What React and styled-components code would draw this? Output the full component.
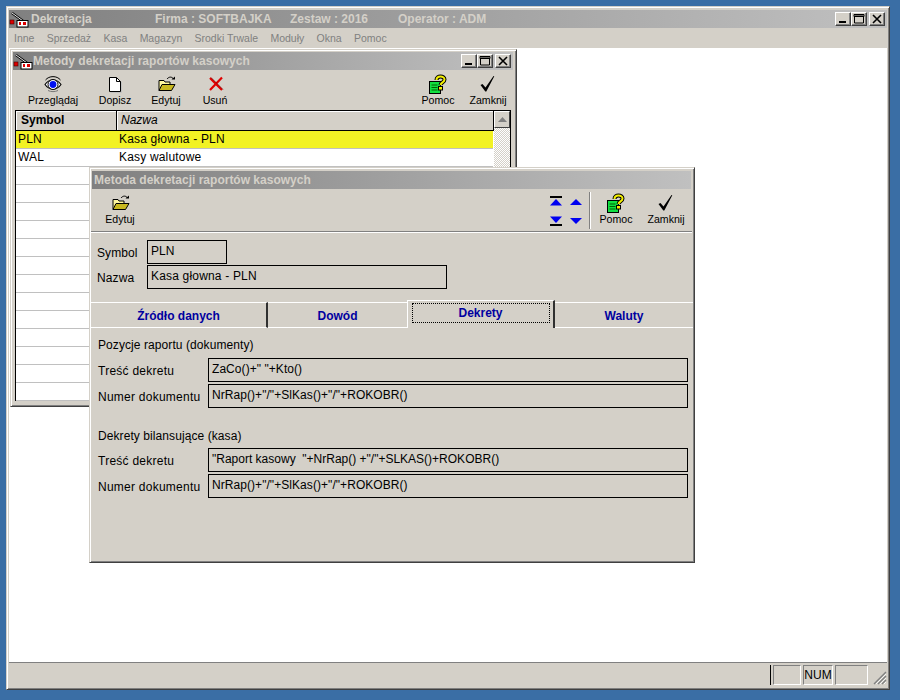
import React from "react";
import styled, { createGlobalStyle } from "styled-components";

const Global = createGlobalStyle`
  html, body { margin: 0; padding: 0; height: 700px; overflow: hidden; background: #3a6ea5; }
  body { font-family: "Liberation Sans", Arial, sans-serif; font-size: 12px; color: #000; }
  * { box-sizing: border-box; }
`;

const grey = "#d4d0c8";

const MainWindow = styled.div`
  margin: 6px 0 0 6px;
  width: 884px;
  height: 684px;
  background: ${grey};
  border: 1px solid;
  border-color: ${grey} #404040 #404040 ${grey};
  box-shadow: inset 1px 1px 0 #fff, inset -1px -1px 0 #808080;
  padding: 3px 2px 3px 2px;
  display: flex;
  flex-direction: column;
`;

const TitleBar = styled.div`
  height: 18px;
  flex: none;
  display: flex;
  align-items: center;
  background: linear-gradient(to right, #808080, #c0c0c0);
  color: ${grey};
  font-weight: bold;
  font-size: 12px;
  white-space: nowrap;
  padding-left: ${(p) => p.$pad || 0}px;
`;

const TitleIcon = styled.svg`
  width: 20px;
  height: 17px;
  flex: none;
`;

const TitleInfo = styled.span`
  width: ${(p) => p.$w}px;
  flex: none;
  margin-left: ${(p) => p.$gap || 0}px;
`;

const Controls = styled.div`
  margin-left: auto;
  display: flex;
  align-items: center;
  padding-right: 2px;
`;

const CtlButton = styled.div`
  width: 16px;
  height: 14px;
  margin-left: ${(p) => p.$gap || 0}px;
  background: ${grey};
  border: 1px solid;
  border-color: #fff #404040 #404040 #fff;
  box-shadow: inset -1px -1px 0 #808080;
  display: flex;
  align-items: center;
  justify-content: center;
`;

const MenuBar = styled.div`
  height: 20px;
  flex: none;
  display: flex;
  align-items: center;
  gap: 12.3px;
  padding-left: 5px;
  color: #808080;
  font-size: 10.5px;
`;

const Workspace = styled.div`
  flex: 1;
  position: relative;
  background: #fff;
  overflow: hidden;
`;

const StatusBar = styled.div`
  height: 24px;
  flex: none;
  border-top: 1px solid #808080;
  display: flex;
  align-items: center;
  justify-content: flex-end;
  position: relative;
  padding: 0 19px 0 0;
`;

const StatusEdge = styled.div`
  width: 1px;
  height: 20px;
  background: #000;
  margin-right: 2px;
`;

const StatusPanel = styled.div`
  width: ${(p) => p.$w}px;
  height: 20px;
  margin-left: ${(p) => p.$gap || 0}px;
  border: 1px solid;
  border-color: #808080 #fff #fff #808080;
  display: flex;
  align-items: center;
  justify-content: center;
`;

const Grip = styled.svg`
  position: absolute;
  right: 0;
  bottom: 1px;
  width: 14px;
  height: 14px;
`;

const ChildWindow = styled.div`
  position: absolute;
  left: ${(p) => p.$x}px;
  top: ${(p) => p.$y}px;
  width: ${(p) => p.$w}px;
  height: ${(p) => p.$h}px;
  background: ${grey};
  border: 1px solid;
  border-color: ${grey} #404040 #404040 ${grey};
  box-shadow: inset 1px 1px 0 #fff, inset -1px -1px 0 #808080;
  padding: ${(p) => p.$top}px 3px 3px 2px;
  display: flex;
  flex-direction: column;
`;

const Toolbar = styled.div`
  height: ${(p) => p.$h}px;
  flex: none;
  display: flex;
  align-items: flex-start;
  padding: 0 ${(p) => p.$right || 0}px 0 ${(p) => p.$left || 0}px;
`;

const ToolbarRule = styled.div`
  height: 2px;
  flex: none;
  margin: 0 -1px;
  background: #808080;
  border-bottom: 1px solid #fff;
`;

const ToolButton = styled.div`
  width: ${(p) => p.$w || 50}px;
  flex: none;
  padding-top: 5px;
  margin-left: ${(p) => (p.$auto ? "auto" : "0")};
  display: flex;
  flex-direction: column;
  align-items: center;
  font-size: 10.6px;
  line-height: 14px;
  white-space: nowrap;
`;

const IconSlot = styled.svg`
  width: 24px;
  height: 18px;
  display: block;
  overflow: visible;
`;

const NavGrid = styled.div`
  margin-left: auto;
  margin-top: 7px;
  margin-right: 7px;
  display: grid;
  grid-template-columns: 12px 12px;
  column-gap: 8px;
  row-gap: 10px;
`;

const NavIcon = styled.svg`
  width: 12px;
  height: 10px;
  display: block;
`;

const VRule = styled.div`
  width: 2px;
  height: 37px;
  margin-top: 3px;
  background: #808080;
  border-right: 1px solid #fff;
`;

/* list grid */
const GridFrame = styled.div`
  margin: 0 0 0 2px;
  width: 496px;
  height: 291px;
  flex: none;
  border: 1px solid #000;
  background: #fff;
  display: flex;
`;

const GridMain = styled.div`
  flex: 1;
  min-width: 0;
`;

const GridRow = styled.div`
  display: grid;
  grid-template-columns: 101px 1fr;
  height: 18px;
  margin-right: 1px;
  background: ${(p) => (p.$selected ? "#f2f224" : "#fff")};
  border-bottom: 1px solid #c0c0c0;
  line-height: 17px;
  padding-left: 2px;
  letter-spacing: 0.18px;
`;

const GridHead = styled.div`
  display: grid;
  grid-template-columns: 100px 1fr;
  height: 20px;
  background: ${grey};
  border-bottom: 1px solid #000;
  border-right: 1px solid #000;
  line-height: 19px;
`;

const HeadCell = styled.div`
  padding-left: ${(p) => p.$pad}px;
  font-weight: ${(p) => (p.$italic ? "normal" : "bold")};
  font-style: ${(p) => (p.$italic ? "italic" : "normal")};
  border-left: ${(p) => (p.$italic ? "1px solid #000" : "0")};
  box-shadow: inset 1px 1px 0 #fff;
`;

const ScrollTrack = styled.div`
  width: 16px;
  flex: none;
  background: repeating-conic-gradient(#fff 0 25%, ${grey} 0 50%) 0 0 / 2px 2px;
`;

const ScrollUp = styled.div`
  height: 17px;
  background: ${grey};
  border: 1px solid;
  border-color: #fff #404040 #404040 #fff;
  display: flex;
  align-items: center;
  justify-content: center;
`;

/* form */
const Form = styled.div`
  display: flex;
  flex-direction: column;
  padding-top: 7px;
`;

const HeadRow = styled.div`
  display: flex;
  align-items: center;
  height: 24px;
  margin: 0 0 1px 3px;
`;

const HeadLabel = styled.div`
  width: 52px;
  padding-left: 2px;
  margin-top: 2px;
  letter-spacing: 0.1px;
`;

const Field = styled.div`
  width: ${(p) => p.$w}px;
  height: 24px;
  border: 1px solid #000;
  padding: 3px 3px 0;
  line-height: 15px;
  white-space: pre;
  letter-spacing: ${(p) => p.$ls || 0}px;
`;

const Tabs = styled.div`
  display: flex;
  align-items: flex-end;
  margin: 10px 0 0 -1px;
  height: 28px;
`;

const Tab = styled.div`
  width: ${(p) => p.$w}px;
  height: ${(p) => (p.$active ? 28 : 26)}px;
  flex: none;
  position: relative;
  display: flex;
  align-items: center;
  justify-content: center;
  color: #0000a0;
  font-weight: bold;
  padding-top: ${(p) => (p.$active ? 0 : 1)}px;
  border-top: 1px solid #fff;
  border-left: ${(p) => (p.$active ? "1px solid #fff" : "0")};
  border-bottom: ${(p) => (p.$active ? "0" : "1px solid #fff")};
  border-right: ${(p) => (p.$dark ? "2px solid #303030" : "0")};
`;

const FocusBox = styled.div`
  width: 138px;
  height: 20px;
  border: 1px dotted #000;
  margin-bottom: 4px;
  display: flex;
  align-items: center;
  justify-content: center;
`;

const Section = styled.div`
  margin: ${(p) => p.$top}px 0 ${(p) => p.$bottom}px 6px;
  padding-top: 1px;
  line-height: 16px;
  letter-spacing: 0.08px;
`;

const FieldRow = styled.div`
  display: flex;
  align-items: center;
  margin: 0 0 ${(p) => p.$gap ?? 2}px 6px;
`;

const FieldLabel = styled.div`
  width: 110px;
  flex: none;
  margin-top: 1px;
  letter-spacing: 0.25px;
`;

const Ico = {
  App: () => (
    <TitleIcon viewBox="0 0 20 17">
      <path d="M3 2 L14 10" stroke="#000" strokeWidth="2.4" />
      <path d="M3 2 L14 10" stroke="#f0f0f0" strokeWidth="1" />
      <rect x="1" y="9" width="4" height="4" fill="#d00" stroke="#400" strokeWidth=".6" />
      <rect x="8" y="9.5" width="11" height="6.5" fill="#fff" stroke="#000" />
      <path d="M10 11h2v3h-2zM14 11h3v3h-3z" fill="#d00" />
    </TitleIcon>
  ),
  Eye: () => (
    <IconSlot viewBox="0 0 24 18">
      <path d="M4.5 5 C8 0.5 16 0.5 19.5 5" fill="none" stroke="#000" />
      <path d="M4 9.5 C8 3.5 16 3.5 20 9.5 C16 15.5 8 15.5 4 9.5 Z" fill="#fff" stroke="#000" strokeWidth="1.1" />
      <circle cx="12" cy="9.5" r="5" fill="#fff" stroke="#000" strokeWidth="1" />
      <circle cx="12" cy="9.5" r="3.4" fill="#0010f0" />
      <path d="M7 15.5 C10 17 14 17 17 15.5" fill="none" stroke="#777" />
    </IconSlot>
  ),
  Doc: () => (
    <IconSlot viewBox="0 0 24 18">
      <path d="M6.5 2.5h7l4 4v10h-11z" fill="#fff" stroke="#000" />
      <path d="M13.5 2.5v4h4" fill="none" stroke="#000" />
      <path d="M18.5 7v10.5h-11" fill="none" stroke="#c0c0c0" />
    </IconSlot>
  ),
  Folder: () => (
    <IconSlot viewBox="0 0 24 18">
      <path d="M5 15.5 V5.5 h5 l1 1.5 h5 v3" fill="#fff8a0" stroke="#000" />
      <path d="M5 15.5 L8 9.5 H21 L17.5 15.5 Z" fill="#c8b820" stroke="#000" />
      <path d="M13 4 C15 1.5 18 1.5 19.5 4" fill="none" stroke="#000" />
      <path d="M17.5 4.5 h3.5 v-3z" fill="#000" />
    </IconSlot>
  ),
  Cross: () => (
    <IconSlot viewBox="0 0 24 18">
      <path d="M7 3 L19 15 M19 2.5 L7 15" stroke="#e00000" strokeWidth="2.2" fill="none" />
      <path d="M8 2.5 L20 14.5" stroke="#600" strokeWidth=".6" fill="none" />
    </IconSlot>
  ),
  Help: () => (
    <IconSlot viewBox="0 0 24 18">
      <rect x="3.5" y="6.5" width="11" height="12" fill="#10e040" stroke="#000" />
      <path d="M5.5 10h6M5.5 12.5h6M5.5 15h6" stroke="#006000" />
      <path d="M10.5 5 C10.5 0.5 18.5 0.5 18.5 4.5 C18.5 7.5 15 7 14.5 10" fill="none" stroke="#000" strokeWidth="4" />
      <path d="M10.5 5 C10.5 0.5 18.5 0.5 18.5 4.5 C18.5 7.5 15 7 14.5 10" fill="none" stroke="#f4f000" strokeWidth="2" />
      <rect x="12.5" y="11.5" width="4" height="3.5" fill="#f4f000" stroke="#000" />
    </IconSlot>
  ),
  Check: () => (
    <IconSlot viewBox="0 0 24 18">
      <path d="M4.5 10 L6.5 9 L9.5 12.5 L17.5 1 L18.3 1.3 L10.3 16.5 L9.3 16.5 Z" fill="#000" />
    </IconSlot>
  ),
};

const CtlGlyph = ({ kind }) => (
  <svg width="12" height="10" viewBox="0 0 12 10">
    {kind === "min" && <rect x="2" y="7" width="7" height="2" fill="#000" />}
    {kind === "max" && <path d="M1.5 2 h9 v7 h-9 z M1 .5 h10 v2 h-10z" fill="none" stroke="#000" />}
    {kind === "close" && <path d="M2 1 L10 9 M10 1 L2 9" stroke="#000" strokeWidth="1.6" />}
  </svg>
);

const CtlSet = () => (
  <Controls>
    <CtlButton><CtlGlyph kind="min" /></CtlButton>
    <CtlButton $gap={0}><CtlGlyph kind="max" /></CtlButton>
    <CtlButton $gap={2}><CtlGlyph kind="close" /></CtlButton>
  </Controls>
);

const Nav = ({ dir, bar }) => (
  <NavIcon viewBox="0 0 12 10">
    {dir === "up" ? (
      <>
        {bar && <rect x="0" y="0" width="12" height="2" fill="#000" />}
        <path d={bar ? "M6 3 L12 9.5 H0 Z" : "M6 3 L12 9 H0 Z"} fill="#0000f0" />
      </>
    ) : (
      <>
        {bar && <rect x="0" y="8" width="12" height="2" fill="#000" />}
        <path d={bar ? "M0 0.5 H12 L6 7 Z" : "M0 2 H12 L6 8 Z"} fill="#0000f0" />
      </>
    )}
  </NavIcon>
);

const Tool = ({ icon: I, label, ...rest }) => (
  <ToolButton {...rest}>
    <I />
    <span>{label}</span>
  </ToolButton>
);

const menu = ["Inne", "Sprzedaż", "Kasa", "Magazyn", "Srodki Trwale", "Moduły", "Okna", "Pomoc"];
const emptyRows = Array.from({ length: 13 });

export default function App() {
  return (
    <>
      <Global />
      <MainWindow>
        <TitleBar>
          <Ico.App />
          <TitleInfo $w={124} $gap={2}>Dekretacja</TitleInfo>
          <TitleInfo $w={135}>Firma : SOFTBAJKA</TitleInfo>
          <TitleInfo $w={108}>Zestaw : 2016</TitleInfo>
          <TitleInfo $w={120}>Operator : ADM</TitleInfo>
          <CtlSet />
        </TitleBar>
        <MenuBar>
          {menu.map((m) => (
            <span key={m}>{m}</span>
          ))}
        </MenuBar>
        <Workspace>
          <ChildWindow $x={1} $y={1} $w={507} $h={358} $top={2}>
            <TitleBar>
              <Ico.App />
              <span>Metody dekretacji raportów kasowych</span>
              <CtlSet />
            </TitleBar>
            <Toolbar $h={40} $left={10} $right={0}>
              <Tool icon={Ico.Eye} label="Przeglądaj" $w={60} />
              <Tool icon={Ico.Doc} label="Dopisz" $w={64} />
              <Tool icon={Ico.Folder} label="Edytuj" $w={38} />
              <Tool icon={Ico.Cross} label="Usuń" $w={60} />
              <Tool icon={Ico.Help} label="Pomoc" $auto />
              <Tool icon={Ico.Check} label="Zamknij" />
            </Toolbar>
            <GridFrame>
              <GridMain>
                <GridHead>
                  <HeadCell $pad={5}>Symbol</HeadCell>
                  <HeadCell $italic $pad={4}>Nazwa</HeadCell>
                </GridHead>
                <GridRow $selected>
                  <span>PLN</span>
                  <span>Kasa głowna - PLN</span>
                </GridRow>
                <GridRow>
                  <span>WAL</span>
                  <span>Kasy walutowe</span>
                </GridRow>
                {emptyRows.map((_, i) => (
                  <GridRow key={i} />
                ))}
              </GridMain>
              <ScrollTrack>
                <ScrollUp>
                  <svg width="9" height="5" viewBox="0 0 9 5"><path d="M4.5 0 L9 5 H0 Z" fill="#808080" /></svg>
                </ScrollUp>
              </ScrollTrack>
            </GridFrame>
          </ChildWindow>

          <ChildWindow $x={80} $y={119} $w={606} $h={396} $top={3}>
            <TitleBar $pad={2}>
              <span>Metoda dekretacji raportów kasowych</span>
            </TitleBar>
            <Toolbar $h={42} $left={3} $right={0}>
              <Tool icon={Ico.Folder} label="Edytuj" />
              <NavGrid>
                <Nav dir="up" bar />
                <Nav dir="up" />
                <Nav dir="down" bar />
                <Nav dir="down" />
              </NavGrid>
              <VRule />
              <Tool icon={Ico.Help} label="Pomoc" />
              <Tool icon={Ico.Check} label="Zamknij" />
            </Toolbar>
            <ToolbarRule />
            <Form>
              <HeadRow>
                <HeadLabel>Symbol</HeadLabel>
                <Field $w={80}>PLN</Field>
              </HeadRow>
              <HeadRow>
                <HeadLabel>Nazwa</HeadLabel>
                <Field $w={300} $ls={0.18}>Kasa głowna - PLN</Field>
              </HeadRow>
              <Tabs>
                <Tab $w={177} $dark>Źródło danych</Tab>
                <Tab $w={139}>Dowód</Tab>
                <Tab $w={148} $active $dark><FocusBox>Dekrety</FocusBox></Tab>
                <Tab $w={138}>Waluty</Tab>
              </Tabs>
              <Section $top={8} $bottom={5}>Pozycje raportu (dokumenty)</Section>
              <FieldRow>
                <FieldLabel>Treść dekretu</FieldLabel>
                <Field $w={480} $ls={0.06}>{'ZaCo()+" "+Kto()'}</Field>
              </FieldRow>
              <FieldRow $gap={0}>
                <FieldLabel>Numer dokumentu</FieldLabel>
                <Field $w={480} $ls={0.06}>{'NrRap()+"/"+SlKas()+"/"+ROKOBR()'}</Field>
              </FieldRow>
              <Section $top={19} $bottom={4}>Dekrety bilansujące (kasa)</Section>
              <FieldRow>
                <FieldLabel>Treść dekretu</FieldLabel>
                <Field $w={480}>{'"Raport kasowy  "+NrRap() +"/"+SLKAS()+ROKOBR()'}</Field>
              </FieldRow>
              <FieldRow $gap={0}>
                <FieldLabel>Numer dokumentu</FieldLabel>
                <Field $w={480} $ls={0.06}>{'NrRap()+"/"+SlKas()+"/"+ROKOBR()'}</Field>
              </FieldRow>
            </Form>
          </ChildWindow>
        </Workspace>
        <StatusBar>
          <StatusEdge />
          <StatusPanel $w={28} />
          <StatusPanel $w={30} $gap={2}>NUM</StatusPanel>
          <StatusPanel $w={33} $gap={2} />
          <Grip viewBox="0 0 14 14">
            <path d="M13 1 L1 13 M13 5 L5 13 M13 9 L9 13" stroke="#808080" strokeWidth="1.4" fill="none" />
            <path d="M13 3 L3 13 M13 7 L7 13 M13 11 L11 13" stroke="#fff" strokeWidth=".8" fill="none" />
          </Grip>
        </StatusBar>
      </MainWindow>
    </>
  );
}
